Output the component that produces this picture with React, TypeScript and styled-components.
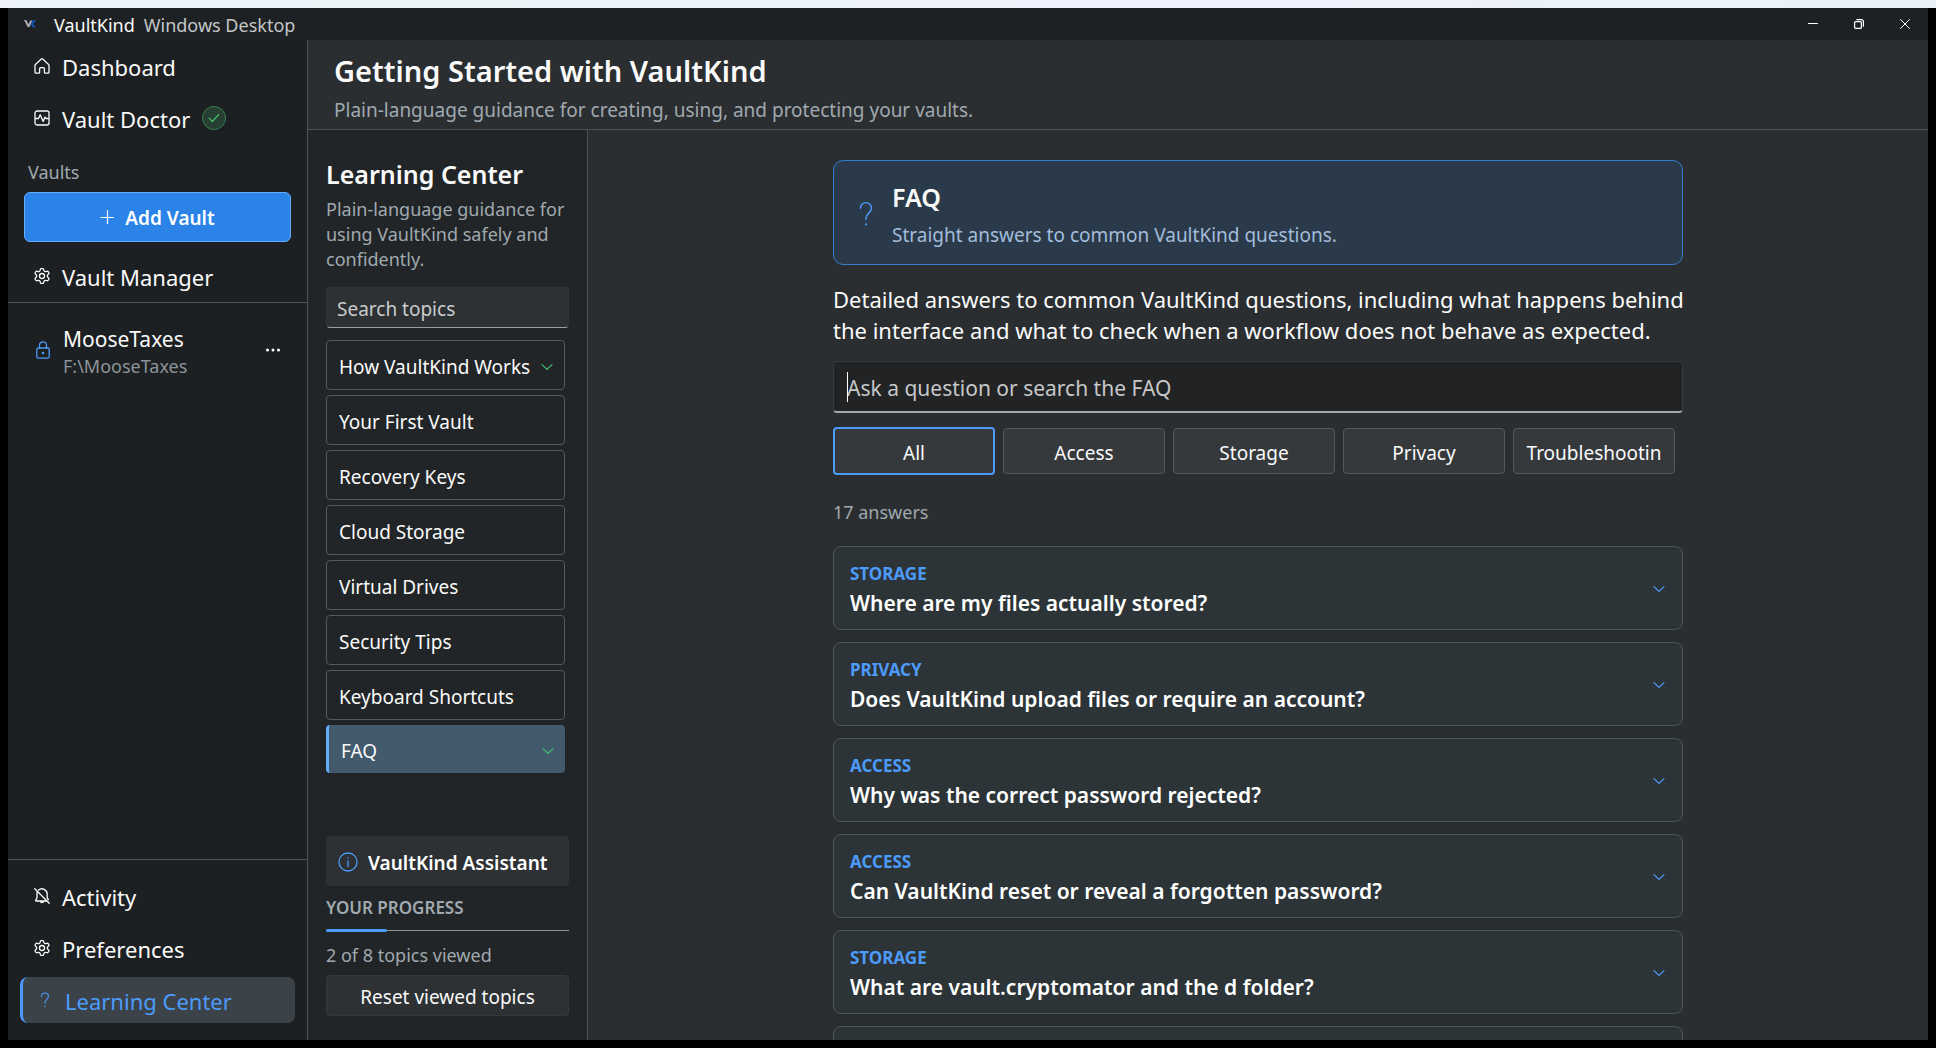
import React, { useState } from "react";
import styled, { createGlobalStyle, css } from "styled-components";

const color = {
  chrome: "#1d2123",
  side: "#1d2022",
  panel: "#212527",
  main: "#2a2e31",
  field: "#2d3134",
  line: "#4d5255",
  text: "#fafafa",
  muted: "#a0a9af",
  accent: "#4c9bfa",
  green: "#3fc16b",
};

const GlobalStyle = createGlobalStyle`
  *, *::before, *::after { box-sizing: border-box; }
  body { margin: 0; background: #000; }
  body, button, input { font-family: "Noto Sans", "Open Sans", sans-serif; }
  h1, h2, h3, p { margin: 0; }
  button { cursor: pointer; }
`;

const Desktop = styled.div`
  display: flex;
  flex-direction: column;
  height: 100vh;
  background: #000;
  color: ${color.text};
`;

const Backdrop = styled.div`
  flex: none;
  height: 8px;
  background: linear-gradient(90deg, #eef3fb, #eaf4f6 20%, #eff1fc 60%, #eaf3f7);
`;

const Window = styled.div`
  flex: 1;
  min-height: 0;
  display: flex;
  flex-direction: column;
  margin: 0 8px 8px;
  background: ${color.chrome};
`;

const TitleBar = styled.header`
  flex: none;
  height: 32px;
  display: flex;
  align-items: center;
  padding-left: 16px;
  font-size: 18px;
  line-height: 24px;
`;

const AppName = styled.span`
  margin: 2px 9px 0 18px;
`;

const Edition = styled.span`
  flex: 1;
  margin-top: 2px;
  color: #c4c6c7;
`;

const WindowButton = styled.button`
  width: 46px;
  height: 32px;
  display: grid;
  place-items: center;
  padding: 0;
  border: 0;
  background: none;
  color: #fff;
`;

const Body = styled.div`
  flex: 1;
  min-height: 0;
  display: flex;
`;

const Sidebar = styled.nav`
  flex: none;
  width: 300px;
  display: flex;
  flex-direction: column;
  border-right: 1px solid ${color.line};
  background: ${color.side};
`;

const NavGroup = styled.div<{ $end?: boolean }>`
  display: flex;
  flex-direction: column;
  gap: 6px;
  ${(p) =>
    p.$end
      ? css`
          padding: 13px 12px 17px;
          border-top: 1px solid ${color.line};
        `
      : css`
          padding: 3px 12px;
        `}
`;

const NavItem = styled.button<{ $active?: boolean }>`
  height: 46px;
  display: flex;
  align-items: center;
  gap: 12px;
  padding: 0 14px;
  border: 0;
  border-left: ${(p) => (p.$active ? `3px solid ${color.accent}` : "0")};
  border-radius: 8px;
  background: ${(p) => (p.$active ? "#3b4248" : "none")};
  color: ${(p) => (p.$active ? color.accent : color.text)};
  font-size: 22px;
  line-height: 30px;
  text-align: left;
  svg {
    flex: none;
  }
`;

const Label = styled.span`
  padding-top: 1px;
`;

const Badge = styled.span`
  width: 24px;
  height: 24px;
  display: grid;
  place-items: center;
  border: 1px solid #35804f;
  border-radius: 50%;
  background: #273f33;
  color: ${color.green};
`;

const GroupTitle = styled.h2`
  padding: 16px 20px 8px;
  color: ${color.muted};
  font-size: 18px;
  font-weight: 400;
  line-height: 24px;
`;

const AddButton = styled.button`
  height: 50px;
  display: flex;
  align-items: center;
  justify-content: center;
  gap: 11px;
  margin: 0 16px 8px;
  border: 1px solid #63adff;
  border-radius: 6px;
  background: #2b83e8;
  color: #fff;
  font-size: 19px;
  font-weight: 600;
  line-height: 26px;
`;

const Vaults = styled.div`
  flex: 1;
  padding: 13px 12px;
  border-top: 1px solid ${color.line};
`;

const VaultRow = styled.div`
  display: flex;
  align-items: center;
  gap: 13px;
  padding: 4px 14px 4px 16px;
  svg {
    color: ${color.accent};
  }
`;

const VaultText = styled.div`
  flex: 1;
  padding-top: 5px;
`;

const VaultName = styled.div`
  font-size: 21px;
  line-height: 28px;
`;

const VaultPath = styled.div`
  color: #8b9498;
  font-size: 18px;
  line-height: 26px;
`;

const MoreButton = styled.button`
  padding: 0;
  border: 0;
  background: none;
  line-height: 0;
  svg {
    color: #fff;
  }
`;

const Content = styled.div`
  flex: 1;
  min-width: 0;
  display: flex;
  flex-direction: column;
  background: ${color.main};
`;

const PageHeader = styled.header`
  flex: none;
  height: 90px;
  padding: 11px 26px 0;
  border-bottom: 1px solid ${color.line};
`;

const PageTitle = styled.h1`
  font-size: 29px;
  font-weight: 600;
  line-height: 40px;
`;

const PageNote = styled.p`
  padding-top: 6px;
  color: ${color.muted};
  font-size: 19px;
  line-height: 26px;
`;

const Columns = styled.div`
  flex: 1;
  min-height: 0;
  display: flex;
`;

const Topics = styled.aside`
  flex: none;
  width: 280px;
  display: flex;
  flex-direction: column;
  padding: 26px 18px 24px;
  border-right: 1px solid ${color.line};
  background: ${color.panel};
`;

const SectionTitle = styled.h2`
  font-size: 25px;
  font-weight: 600;
  line-height: 36px;
`;

const TopicsNote = styled.p`
  padding: 5px 0 15px;
  color: ${color.muted};
  font-size: 18px;
  line-height: 25px;
`;

const TopicSearch = styled.input`
  width: 100%;
  height: 41px;
  flex: none;
  padding: 2px 10px 0;
  border: 1px solid #303437;
  border-bottom-color: #9b9d9f;
  border-radius: 4px;
  outline: 0;
  background: ${color.field};
  color: ${color.text};
  font-size: 19px;
  &::placeholder {
    color: #c9cbcc;
    opacity: 1;
  }
`;

const TopicList = styled.div`
  flex: 1;
  display: flex;
  flex-direction: column;
  gap: 5px;
  padding: 12px 4px 0 0;
`;

const TopicButton = styled.button<{ $active?: boolean }>`
  height: ${(p) => (p.$active ? 48 : 50)}px;
  display: flex;
  align-items: center;
  justify-content: space-between;
  padding: 3px 11px 0 12px;
  border: 1px solid #52595f;
  border-radius: 4px;
  background: none;
  color: ${color.text};
  font-size: 19px;
  line-height: 26px;
  text-align: left;
  white-space: nowrap;
  ${(p) =>
    p.$active &&
    css`
      border: 0;
      border-left: 3px solid #63adff;
      background: #43596c;
    `}
  svg {
    flex: none;
    color: ${color.green};
  }
`;

const Assistant = styled.button`
  height: 50px;
  display: flex;
  align-items: center;
  gap: 10px;
  padding: 2px 12px 0;
  border: 0;
  border-radius: 4px;
  background: ${color.field};
  color: #fff;
  font-size: 19px;
  font-weight: 600;
  line-height: 26px;
  white-space: nowrap;
  svg {
    flex: none;
    color: ${color.accent};
  }
`;

const ProgressTitle = styled.h3`
  padding-top: 10px;
  color: ${color.muted};
  font-size: 17px;
  font-weight: 600;
  line-height: 24px;
`;

const ProgressTrack = styled.div`
  height: 3px;
  margin-top: 9px;
  background: linear-gradient(#909496, #909496) center / 100% 1px no-repeat;
`;

const ProgressFill = styled.div`
  height: 3px;
  border-radius: 2px;
  background: ${color.accent};
`;

const ProgressText = styled.p`
  padding: 11px 0 7px;
  color: ${color.muted};
  font-size: 18px;
  line-height: 25px;
`;

const ResetButton = styled.button`
  height: 41px;
  padding: 3px 6px 0;
  border: 1px solid #34383b;
  border-radius: 4px;
  background: ${color.field};
  color: ${color.text};
  font-size: 19px;
  line-height: 26px;
`;

const Main = styled.main`
  flex: 1;
  min-width: 0;
  overflow-y: auto;
  scrollbar-width: none;
  padding: 30px 24px;
`;

const Article = styled.div`
  max-width: 850px;
  margin: 0 auto;
`;

const Banner = styled.section`
  display: flex;
  align-items: center;
  gap: 13px;
  padding: 18px 19px 16px;
  border: 1px solid #347dcc;
  border-radius: 10px;
  background: #2a3a4a;
  svg {
    flex: none;
    color: ${color.accent};
  }
`;

const BannerNote = styled.p`
  padding-top: 7px;
  color: #a3bddb;
  font-size: 19px;
  line-height: 26px;
`;

const Intro = styled.p`
  margin-right: -8px;
  padding: 19px 0 15px;
  font-size: 22px;
  line-height: 31px;
`;

const FaqField = styled.div`
  position: relative;
  &:has(input:placeholder-shown)::after {
    content: "";
    position: absolute;
    top: 11px;
    left: 14px;
    width: 1px;
    height: 30px;
    background: #fff;
  }
`;

const FaqSearch = styled.input`
  width: 100%;
  height: 52px;
  display: block;
  padding: 2px 13px 0;
  border: 1px solid #37393b;
  border-bottom: 2px solid #a8a9a9;
  border-radius: 4px;
  outline: 0;
  background: #222325;
  color: ${color.text};
  font-size: 21px;
  &:placeholder-shown {
    caret-color: transparent;
  }
  &::placeholder {
    color: #c6c7c8;
    opacity: 1;
  }
`;

const Filters = styled.div`
  height: 48px;
  display: flex;
  align-items: center;
  gap: 8px;
  margin: 14px 0 24px;
`;

const Filter = styled.button<{ $active?: boolean }>`
  width: 162px;
  height: ${(p) => (p.$active ? 48 : 46)}px;
  padding: 3px 11px 0;
  border: ${(p) => (p.$active ? `2px solid ${color.accent}` : "1px solid #515a61")};
  border-radius: 4px;
  background: #35393c;
  color: ${color.text};
  font-size: 19px;
  line-height: 26px;
  white-space: nowrap;
`;

const Count = styled.p`
  padding-bottom: 21px;
  color: ${color.muted};
  font-size: 18px;
  line-height: 26px;
`;

const Cards = styled.div`
  display: flex;
  flex-direction: column;
  gap: 12px;
`;

const Card = styled.button`
  width: 100%;
  height: 84px;
  display: flex;
  align-items: center;
  justify-content: space-between;
  padding: 2px 17px 0 16px;
  border: 1px solid #4e565a;
  border-radius: 8px;
  background: #2c3437;
  color: #fff;
  text-align: left;
  svg {
    color: ${color.accent};
  }
`;

const CardTag = styled.span`
  display: block;
  color: ${color.accent};
  font-size: 17px;
  font-weight: 700;
  line-height: 28px;
`;

const CardQuestion = styled.span`
  display: block;
  font-size: 21px;
  font-weight: 600;
  line-height: 30px;
`;

type IconProps = {
  w?: number;
  h?: number;
  box?: string;
  stroke?: number;
  children: React.ReactNode;
};

const Icon = ({ w = 16, h = 16, box, stroke = 1.3, children }: IconProps) => (
  <svg
    width={w}
    height={h}
    viewBox={box ?? `0 0 ${w} ${h}`}
    fill="none"
    stroke="currentColor"
    strokeWidth={stroke}
    strokeLinecap="round"
    strokeLinejoin="round"
    aria-hidden="true"
  >
    {children}
  </svg>
);

const HomeIcon = () => (
  <Icon>
    <path d="M1 7.200a1 1 0 0 1 .4-.8L7.300 1.100a1 1 0 0 1 1.400 0l5.900 5.300a1 1 0 0 1 .4.8v7a1 1 0 0 1-1 1h-2.800a.8.8 0 0 1-.8-.8v-3.700a1 1 0 0 0-1-1H6.600a1 1 0 0 0-1 1v3.700a.8.8 0 0 1-.8.8H2a1 1 0 0 1-1-1z" />
  </Icon>
);

const DoctorIcon = () => (
  <Icon>
    <rect x="1" y="1" width="14" height="14" rx="2" />
    <path d="M1.500 8.500h3l1.700-3.700 3 6.700 1.800-4.500.9 1.500h2.500" />
  </Icon>
);

const GearIcon = () => (
  <Icon box="1.500 1.500 21 21" stroke={1.700}>
    <path d="M9.671 4.136a2.340 2.340 0 0 1 4.659 0 2.340 2.340 0 0 0 3.319 1.915 2.340 2.340 0 0 1 2.330 4.033 2.340 2.340 0 0 0 0 3.831 2.340 2.340 0 0 1-2.330 4.033 2.340 2.340 0 0 0-3.319 1.915 2.340 2.340 0 0 1-4.659 0 2.340 2.340 0 0 0-3.320-1.915 2.340 2.340 0 0 1-2.330-4.033 2.340 2.340 0 0 0 0-3.831A2.340 2.340 0 0 1 6.350 6.051a2.340 2.340 0 0 0 3.319-1.915" />
    <circle cx="12" cy="12" r="3.300" />
  </Icon>
);

const BellOffIcon = () => (
  <Icon>
    <path d="M4.600 2.100A5.200 5.200 0 0 1 13.200 6v3.600l1.100 2.300M12.300 13H2.200a.5.500 0 0 1-.5-.7L3 9.600V5.200c0-.6.100-1.100.3-1.600M6.200 13.200a1.900 1.900 0 0 0 3.700 0M.8.800l14.400 14.400" />
  </Icon>
);

const HelpIcon = ({ size = 16 }: { size?: number }) => (
  <Icon w={size} h={size} box="0 0 16 16" stroke={size > 16 ? 0.9 : 1.1}>
    <path d="M4.600 4.400a3.400 3.400 0 0 1 6.800 0c0 2.700-3.400 3.200-3.400 6.300v.6" />
    <path d="M8 14.400v.1" strokeWidth="1.300" />
  </Icon>
);

const LockIcon = () => (
  <Icon w={14} h={18}>
    <rect x=".8" y="7" width="12.400" height="10.200" rx="1.500" />
    <path d="M3.500 7V4.300a3.500 3.500 0 0 1 7 0V7" />
    <circle cx="7" cy="12" r=".7" fill="currentColor" />
  </Icon>
);

const DotsIcon = () => (
  <Icon w={16} h={6} stroke={0}>
    <circle cx="2.500" cy="3" r="1.500" fill="currentColor" />
    <circle cx="8" cy="3" r="1.500" fill="currentColor" />
    <circle cx="13.500" cy="3" r="1.500" fill="currentColor" />
  </Icon>
);

const PlusIcon = () => (
  <Icon w={14} h={14} stroke={1.200}>
    <path d="M7.500.600v13M1 7.500h13" />
  </Icon>
);

const ChevronIcon = () => (
  <Icon w={12} h={8} stroke={1.200}>
    <path d="M1 1.600 6 6.400l5-4.800" />
  </Icon>
);

const CheckIcon = () => (
  <Icon w={12} h={10} stroke={1.200}>
    <path d="M1.200 5.200 4.300 8.500l6.500-7" />
  </Icon>
);

const InfoIcon = () => (
  <Icon w={20} h={20}>
    <circle cx="10" cy="10" r="9" />
    <path d="M10 9v5.500M10 6v.2" />
  </Icon>
);

const LogoIcon = () => (
  <svg width="12" height="8" viewBox="0 0 12 8" aria-hidden="true">
    <path d="M0 0h2.300l2.100 4.300L6.300.500h2L5.500 7H3.600z" fill="#a9adb2" />
    <path d="M8.700.300H12L9 3.900 11.600 7.500H9L6.700 4.500z" fill="#1257b8" />
  </svg>
);

const MinimizeIcon = () => (
  <Icon w={10} h={10} stroke={1}>
    <path d="M.5 4.500h9" />
  </Icon>
);

const RestoreIcon = () => (
  <Icon w={10} h={10} stroke={1.200}>
    <rect x=".6" y="2.600" width="6.800" height="6.800" rx="1" />
    <path d="M2.800.600h4.600a2 2 0 0 1 2 2v4.600" />
  </Icon>
);

const CloseIcon = () => (
  <Icon w={10} h={10} stroke={1}>
    <path d="M.5.500l9 9M9.500.500l-9 9" />
  </Icon>
);

const topics = [
  { name: "How VaultKind Works", viewed: true },
  { name: "Your First Vault" },
  { name: "Recovery Keys" },
  { name: "Cloud Storage" },
  { name: "Virtual Drives" },
  { name: "Security Tips" },
  { name: "Keyboard Shortcuts" },
  { name: "FAQ", viewed: true },
];

const filters = ["All", "Access", "Storage", "Privacy", "Troubleshootin"];

const questions = [
  ["STORAGE", "Where are my files actually stored?"],
  ["PRIVACY", "Does VaultKind upload files or require an account?"],
  ["ACCESS", "Why was the correct password rejected?"],
  ["ACCESS", "Can VaultKind reset or reveal a forgotten password?"],
  ["STORAGE", "What are vault.cryptomator and the d folder?"],
  ["", ""],
];

export default function App() {
  const [topic, setTopic] = useState("FAQ");
  const [filter, setFilter] = useState("All");
  const viewed = topics.filter((t) => t.viewed).length;

  return (
    <Desktop>
      <GlobalStyle />
      <Backdrop />
      <Window>
        <TitleBar>
          <LogoIcon />
          <AppName>VaultKind</AppName>
          <Edition>Windows Desktop</Edition>
          <WindowButton aria-label="Minimize">
            <MinimizeIcon />
          </WindowButton>
          <WindowButton aria-label="Restore">
            <RestoreIcon />
          </WindowButton>
          <WindowButton aria-label="Close">
            <CloseIcon />
          </WindowButton>
        </TitleBar>
        <Body>
          <Sidebar>
            <NavGroup>
              <NavItem>
                <HomeIcon />
                <Label>Dashboard</Label>
              </NavItem>
              <NavItem>
                <DoctorIcon />
                <Label>Vault Doctor</Label>
                <Badge>
                  <CheckIcon />
                </Badge>
              </NavItem>
            </NavGroup>
            <GroupTitle>Vaults</GroupTitle>
            <AddButton>
              <PlusIcon />
              <Label>Add Vault</Label>
            </AddButton>
            <NavGroup>
              <NavItem>
                <GearIcon />
                <Label>Vault Manager</Label>
              </NavItem>
            </NavGroup>
            <Vaults>
              <VaultRow>
                <LockIcon />
                <VaultText>
                  <VaultName>MooseTaxes</VaultName>
                  <VaultPath>F:\MooseTaxes</VaultPath>
                </VaultText>
                <MoreButton aria-label="More options">
                  <DotsIcon />
                </MoreButton>
              </VaultRow>
            </Vaults>
            <NavGroup $end>
              <NavItem>
                <BellOffIcon />
                <Label>Activity</Label>
              </NavItem>
              <NavItem>
                <GearIcon />
                <Label>Preferences</Label>
              </NavItem>
              <NavItem $active>
                <HelpIcon />
                <Label>Learning Center</Label>
              </NavItem>
            </NavGroup>
          </Sidebar>
          <Content>
            <PageHeader>
              <PageTitle>Getting Started with VaultKind</PageTitle>
              <PageNote>
                Plain-language guidance for creating, using, and protecting your vaults.
              </PageNote>
            </PageHeader>
            <Columns>
              <Topics>
                <SectionTitle>Learning Center</SectionTitle>
                <TopicsNote>
                  Plain-language guidance for using VaultKind safely and confidently.
                </TopicsNote>
                <TopicSearch aria-label="Search topics" placeholder="Search topics" />
                <TopicList>
                  {topics.map((t) => (
                    <TopicButton
                      key={t.name}
                      $active={t.name === topic}
                      onClick={() => setTopic(t.name)}
                    >
                      {t.name}
                      {t.viewed && <ChevronIcon />}
                    </TopicButton>
                  ))}
                </TopicList>
                <Assistant>
                  <InfoIcon />
                  <Label>VaultKind Assistant</Label>
                </Assistant>
                <ProgressTitle>YOUR PROGRESS</ProgressTitle>
                <ProgressTrack>
                  <ProgressFill style={{ width: `${(viewed / topics.length) * 100}%` }} />
                </ProgressTrack>
                <ProgressText>
                  {`${viewed} of ${topics.length} topics viewed`}
                </ProgressText>
                <ResetButton>Reset viewed topics</ResetButton>
              </Topics>
              <Main>
                <Article>
                  <Banner>
                    <HelpIcon size={26} />
                    <div>
                      <SectionTitle>FAQ</SectionTitle>
                      <BannerNote>Straight answers to common VaultKind questions.</BannerNote>
                    </div>
                  </Banner>
                  <Intro>
                    Detailed answers to common VaultKind questions, including what happens behind
                    the interface and what to check when a workflow does not behave as expected.
                  </Intro>
                  <FaqField>
                    <FaqSearch
                      autoFocus
                      aria-label="Search the FAQ"
                      placeholder="Ask a question or search the FAQ"
                    />
                  </FaqField>
                  <Filters>
                    {filters.map((f) => (
                      <Filter key={f} $active={f === filter} onClick={() => setFilter(f)}>
                        {f}
                      </Filter>
                    ))}
                  </Filters>
                  <Count>17 answers</Count>
                  <Cards>
                    {questions.map(([tag, question], i) => (
                      <Card key={i}>
                        <span>
                          <CardTag>{tag}</CardTag>
                          <CardQuestion>{question}</CardQuestion>
                        </span>
                        <ChevronIcon />
                      </Card>
                    ))}
                  </Cards>
                </Article>
              </Main>
            </Columns>
          </Content>
        </Body>
      </Window>
    </Desktop>
  );
}
